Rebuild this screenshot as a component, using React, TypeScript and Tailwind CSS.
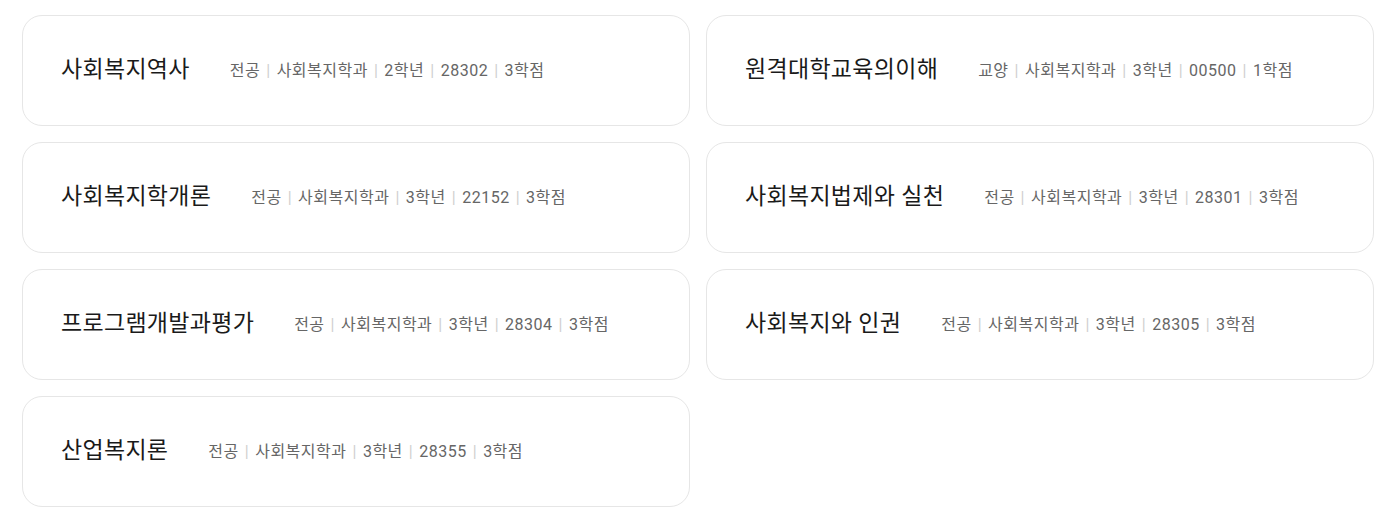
const courses = [
  { title: "사회복지역사", meta: ["전공", "사회복지학과", "2학년", "28302", "3학점"] },
  { title: "원격대학교육의이해", meta: ["교양", "사회복지학과", "3학년", "00500", "1학점"] },
  { title: "사회복지학개론", meta: ["전공", "사회복지학과", "3학년", "22152", "3학점"] },
  { title: "사회복지법제와 실천", meta: ["전공", "사회복지학과", "3학년", "28301", "3학점"] },
  { title: "프로그램개발과평가", meta: ["전공", "사회복지학과", "3학년", "28304", "3학점"] },
  { title: "사회복지와 인권", meta: ["전공", "사회복지학과", "3학년", "28305", "3학점"] },
  { title: "산업복지론", meta: ["전공", "사회복지학과", "3학년", "28355", "3학점"] },
];

export default function App() {
  return (
    <div
      className="min-h-[517px] bg-white"
      style={{ fontFamily: 'Roboto, "Noto Sans CJK KR", sans-serif' }}
    >
      <div className="ml-[22px] grid w-[1352px] grid-cols-2 gap-4 pt-[15px]">
        {courses.map((c) => (
          <article
            key={c.title}
            className="flex h-[111px] items-center rounded-[20px] border border-[#e6e6e6] bg-white pl-[38px]"
          >
            <h3 className="text-[23px] font-normal tracking-[0.3px] text-[#1a1a1a]">
              {c.title}
            </h3>
            <p className="ml-10 flex items-center text-[16px] tracking-[0.5px] text-[#666]">
              {c.meta.map((m, i) => (
                <span key={i} className="flex items-center">
                  {i > 0 && <span className="mx-[6px] text-[#cfcfcf]">|</span>}
                  {m}
                </span>
              ))}
            </p>
          </article>
        ))}
      </div>
    </div>
  );
}
